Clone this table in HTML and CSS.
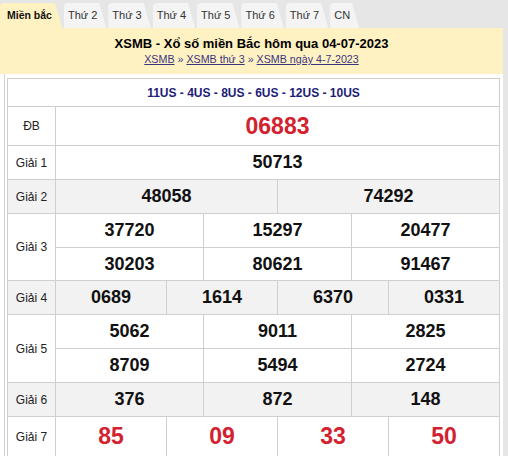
FILE: index.html
```html
<!DOCTYPE html>
<html lang="vi">
<head>
<meta charset="utf-8">
<title>XSMB hôm qua 04-07-2023</title>
<link rel="stylesheet" href="styles.css">
</head>
<body>
<div class="page">
  <nav class="tabs">
    <span class="tab active">Miền bắc</span>
    <span class="tab">Thứ 2</span>
    <span class="tab">Thứ 3</span>
    <span class="tab">Thứ 4</span>
    <span class="tab">Thứ 5</span>
    <span class="tab">Thứ 6</span>
    <span class="tab">Thứ 7</span>
    <span class="tab">CN</span>
  </nav>
  <div class="box">
    <header class="head">
      <h1 class="title">XSMB - Xổ số miền Bắc hôm qua 04-07-2023</h1>
      <div class="crumbs"><a href="#">XSMB</a> » <a href="#">XSMB thứ 3</a> » <a href="#">XSMB ngày 4-7-2023</a></div>
    </header>
    <div class="body">
      <table class="kq">
        <colgroup>
          <col class="col-label">
          <col span="12">
        </colgroup>
        <tr class="r-code"><td colspan="13" class="codes">11US - 4US - 8US - 6US - 12US - 10US</td></tr>
        <tr class="r-db"><td class="lbl">ĐB</td><td colspan="12" class="num db">06883</td></tr>
        <tr class="r-n"><td class="lbl">Giải 1</td><td colspan="12" class="num">50713</td></tr>
        <tr class="r-n alt"><td class="lbl">Giải 2</td><td colspan="6" class="num">48058</td><td colspan="6" class="num">74292</td></tr>
        <tr class="r-n"><td class="lbl" rowspan="2">Giải 3</td><td colspan="4" class="num">37720</td><td colspan="4" class="num">15297</td><td colspan="4" class="num">20477</td></tr>
        <tr class="r-n2"><td colspan="4" class="num">30203</td><td colspan="4" class="num">80621</td><td colspan="4" class="num">91467</td></tr>
        <tr class="r-n alt"><td class="lbl">Giải 4</td><td colspan="3" class="num">0689</td><td colspan="3" class="num">1614</td><td colspan="3" class="num">6370</td><td colspan="3" class="num">0331</td></tr>
        <tr class="r-n"><td class="lbl" rowspan="2">Giải 5</td><td colspan="4" class="num">5062</td><td colspan="4" class="num">9011</td><td colspan="4" class="num">2825</td></tr>
        <tr class="r-n"><td colspan="4" class="num">8709</td><td colspan="4" class="num">5494</td><td colspan="4" class="num">2724</td></tr>
        <tr class="r-n alt"><td class="lbl">Giải 6</td><td colspan="4" class="num">376</td><td colspan="4" class="num">872</td><td colspan="4" class="num">148</td></tr>
        <tr class="r-g7"><td class="lbl">Giải 7</td><td colspan="3" class="num red">85</td><td colspan="3" class="num red">09</td><td colspan="3" class="num red">33</td><td colspan="3" class="num red">50</td></tr>
      </table>
    </div>
  </div>
</div>
</body>
</html>
```
FILE: styles.css
```css
* { box-sizing: border-box; }
html, body {
  margin: 0;
  padding: 0;
  background: #e6e6e6;
  font-family: "Liberation Sans", Arial, sans-serif;
  color: #000;
}
.page {
  width: 503px;
  padding-top: 3px;
}
.tabs {
  display: flex;
  gap: 2px;
  height: 25px;
}
.tab {
  display: block;
  height: 25px;
  line-height: 25px;
  font-size: 11px;
  color: #333;
  background: #f4f4f4;
  padding: 0 9px 0 4px;
  border-radius: 4px 0 0 0;
  clip-path: polygon(0 0, calc(100% - 7px) 0, 100% 100%, 0 100%);
}
.tab.active {
  background: #fff2c2;
  font-weight: bold;
  font-size: 10.5px;
  color: #111;
  padding: 0 10px 0 7px;
}
.box {
  background: #fff;
}
.head {
  background: #fff2c2;
  height: 46px;
  padding-top: 8px;
  text-align: center;
}
.title {
  margin: 0;
  font-size: 13px;
  line-height: 16px;
  font-weight: bold;
  color: #000;
}
.crumbs {
  font-size: 10.7px;
  line-height: 14px;
  color: #3c3c8c;
}
.crumbs a {
  color: #3c3580;
  text-decoration: underline;
}
.body {
  padding: 4px 4px 0 2px;
  margin-left: 4px;
  border-left: 1px solid #d4d4d4;
}
.kq {
  width: 493px;
  border-collapse: collapse;
  table-layout: fixed;
}
.col-label { width: 48px; }
.kq td {
  border: 1px solid #cfcfcf;
  text-align: center;
  vertical-align: middle;
  padding: 0;
}
.r-code { height: 28px; }
.r-db { height: 39px; }
.r-n { height: 34px; }
.r-n2 { height: 33px; }
.r-g7 { height: 40px; }
.alt td { background: #f2f2f2; }
.codes {
  font-size: 12px;
  font-weight: bold;
  color: #1d1d78;
}
.lbl {
  font-size: 12px;
  color: #222;
}
.num {
  font-size: 18px;
  font-weight: bold;
  color: #111;
}
.num.db {
  font-size: 23px;
  color: #d3222f;
}
.num.red {
  font-size: 23px;
  color: #d3222f;
}
```
